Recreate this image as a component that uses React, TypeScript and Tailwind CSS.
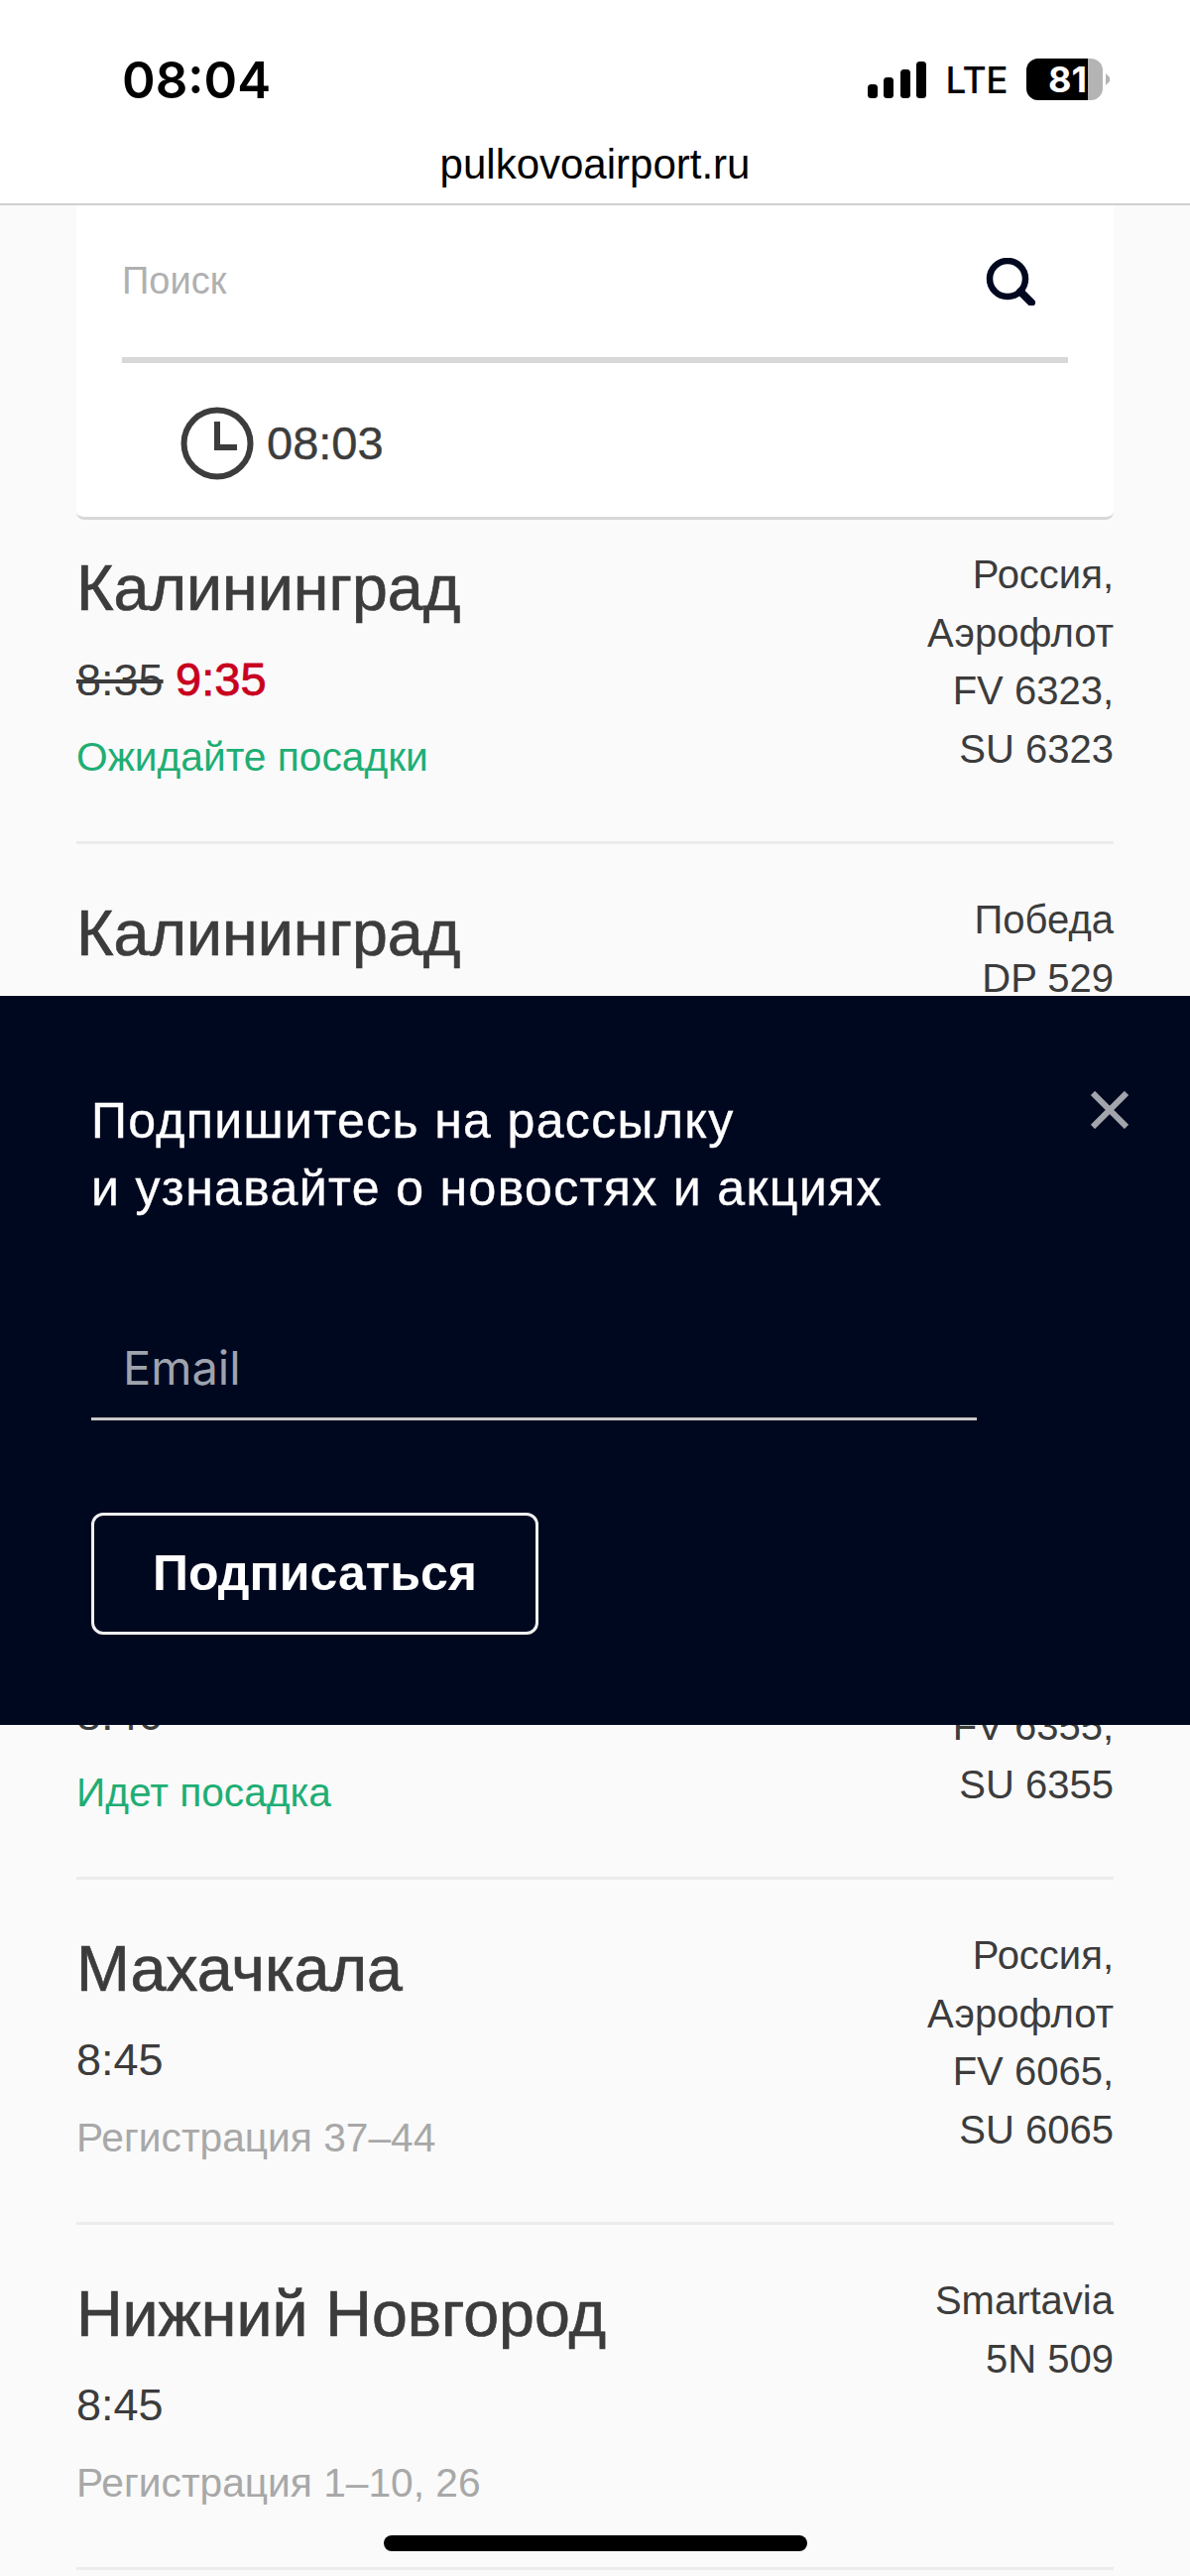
import React from 'react';

type Flight = {
  city?: string;
  time?: React.ReactNode;
  status?: string;
  statusClass?: string;
  airline: string[];
};

const flights: Flight[] = [
  {
    city: 'Калининград',
    time: (
      <>
        <span className="line-through">8:35</span>{' '}
        <span className="text-[47px] text-[#c8001e] [-webkit-text-stroke:0.8px_#c8001e]">9:35</span>
      </>
    ),
    status: 'Ожидайте посадки',
    statusClass: 'text-[#1fae74]',
    airline: ['Россия,', 'Аэрофлот', 'FV 6323,', 'SU 6323'],
  },
  { city: 'Калининград', airline: ['Победа', 'DP 529'] },
  { airline: [] },
  {
    time: '8:40',
    status: 'Идет посадка',
    statusClass: 'text-[#1fae74]',
    airline: ['', '', 'FV 6355,', 'SU 6355'],
  },
  {
    city: 'Махачкала',
    time: '8:45',
    status: 'Регистрация 37–44',
    statusClass: 'text-[#a8a8a8]',
    airline: ['Россия,', 'Аэрофлот', 'FV 6065,', 'SU 6065'],
  },
  {
    city: 'Нижний Новгород',
    time: '8:45',
    status: 'Регистрация 1–10, 26',
    statusClass: 'text-[#a8a8a8]',
    airline: ['Smartavia', '5N 509'],
  },
];

function FlightRow({ flight }: { flight: Flight }) {
  return (
    <div className="flex h-[348px] justify-between border-b-[3px] border-[#ececec]">
      <div className="pt-[54px]">
        <div className="h-[72px] text-[64.5px] leading-[72px] [-webkit-text-stroke:0.7px_#3c3c3c]">{flight.city}</div>
        <div className="mt-[27px] h-[58px] text-[45px] leading-[58px]">{flight.time}</div>
        <div className={`mt-[20px] h-[58px] text-[40.7px] leading-[58px] ${flight.statusClass ?? ''}`}>
          {flight.status}
        </div>
      </div>
      <div className="pt-[47px] text-right text-[40px] leading-[58.5px]">
        {flight.airline.map((line, i) => (
          <div key={i} className="h-[58.5px]">
            {line}
          </div>
        ))}
      </div>
    </div>
  );
}

function StatusBar() {
  return (
    <div className="flex h-[143px] items-center justify-between pl-[123px] pr-[81px] pt-[17px]">
      <span className="font-['Inter',sans-serif] text-[51px] font-semibold leading-none text-black">08:04</span>
      <div className="flex items-center">
        <svg width="59" height="37" viewBox="0 0 59 37" fill="#000">
          <rect x="0" y="23" width="10" height="14" rx="3.5" />
          <rect x="16" y="16" width="10" height="21" rx="3.5" />
          <rect x="33" y="8" width="10" height="29" rx="3.5" />
          <rect x="49" y="0" width="10" height="37" rx="3.5" />
        </svg>
        <span className="ml-[20px] font-['Inter',sans-serif] text-[37px] font-medium leading-none tracking-[-0.5px] text-black">LTE</span>
        <div className="ml-[19px] flex h-[42px] w-[77px] rounded-[12px] bg-[#b4b4b4]">
          <div className="flex h-full w-[62px] items-center justify-end rounded-l-[12px] bg-black pr-[1px] font-['Inter',sans-serif] text-[36px] font-bold leading-none text-white">
            81
          </div>
        </div>
        <svg className="ml-[3px]" width="4" height="12" viewBox="0 0 4 12" fill="#b4b4b4">
          <path d="M0 0 L4 4 L4 8 L0 12 Z" />
        </svg>
      </div>
    </div>
  );
}

function SearchCard() {
  return (
    <div className="relative z-10 mx-[77px] h-[317px] rounded-b-[8px] border-b-[3px] border-[#d8d8d8] bg-white px-[46px]">
      <div className="flex h-[159px] items-center justify-between border-b-[6px] border-[#d8d8d8] pr-[33px]">
        <span className="text-[38px] text-[#b0b0b0]">Поиск</span>
        <svg width="50" height="48" viewBox="0 0 50 48" fill="none" stroke="#000820" strokeWidth="6.5" strokeLinecap="round">
          <circle cx="22" cy="21" r="18" />
          <path d="M35 34 L46 45" strokeWidth="8" />
        </svg>
      </div>
      <div className="flex items-center pl-[59px] pt-[44px]">
        <svg width="74" height="74" viewBox="0 0 74 74" fill="none" stroke="#3c3c3c" strokeWidth="6">
          <circle cx="37" cy="37" r="33.5" />
          <path d="M37 15 V41 H57" />
        </svg>
        <span className="ml-[13px] text-[47px] leading-[70px] text-[#3c3c3c] [-webkit-text-stroke:0.4px_#3c3c3c]">08:03</span>
      </div>
    </div>
  );
}

function SubscribePopup() {
  return (
    <div className="absolute left-0 right-0 top-[1004px] z-20 h-[735px] bg-[#000820] pl-[92px] pt-[92px] text-white">
      <svg className="absolute right-[62px] top-[96px]" width="38" height="38" viewBox="0 0 38 38" stroke="#a3a5ad" strokeWidth="6">
        <path d="M2 2 L36 36 M36 2 L2 36" />
      </svg>
      <div className="text-[50px] leading-[68px] tracking-[1.35px] [-webkit-text-stroke:0.4px_#ffffff]">
        Подпишитесь на рассылку
        <br />
        и узнавайте о новостях и акциях
      </div>
      <div className="mt-[104px] h-[96px] w-[893px] border-b-[3px] border-[#c8c8c8] pl-[32px] font-['Inter',sans-serif] text-[47px] leading-[86px] text-[#9ea3ad]">
        Email
      </div>
      <button className="mt-[93px] flex h-[123px] w-[451px] items-center justify-center rounded-[12px] border-[3px] border-[#f0f0f0] text-[50px] font-bold">
        Подписаться
      </button>
    </div>
  );
}

export default function App() {
  return (
    <div className="relative h-[2597px] w-[1200px] overflow-hidden bg-[#fafafa] font-['Liberation_Sans',Arial,sans-serif] text-[#3c3c3c]">
      <div className="h-[207px] border-b-[2px] border-[#d0d0d0] bg-white">
        <StatusBar />
        <div className="text-center text-[42px] leading-[46px] text-black">pulkovoairport.ru</div>
      </div>
      <SearchCard />
      <div className="mx-[77px] -mt-[21px]">
        {flights.map((flight, i) => (
          <FlightRow key={i} flight={flight} />
        ))}
      </div>
      <SubscribePopup />
      <div className="absolute bottom-[25px] left-[387px] z-30 h-[16px] w-[427px] rounded-full bg-black" />
    </div>
  );
}
